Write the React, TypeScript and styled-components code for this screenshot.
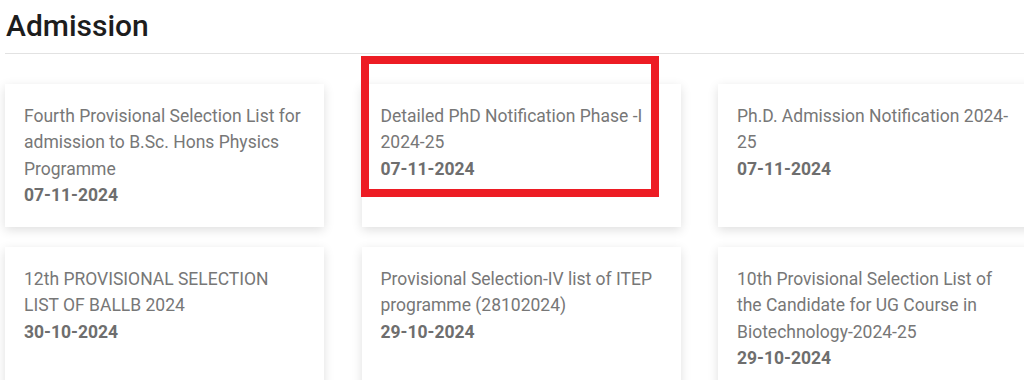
import React from "react";
import styled, { createGlobalStyle } from "styled-components";

const Global = createGlobalStyle`
  html, body { margin: 0; padding: 0; background: #fff; overflow: hidden; }
  body { font-family: Roboto, "Liberation Sans", Arial, sans-serif; }
`;

const Page = styled.div`
  width: 1100px;
  padding: 0 0 0 5px;
  position: relative;
`;

const Title = styled.h2`
  margin: 0;
  padding: 10px 0 0 1px;
  font-size: 30px;
  font-weight: 500;
  line-height: 32px;
  color: #1d1d1d;
  height: 43px;
  border-bottom: 1px solid #e2e2e2;
`;

const Grid = styled.div`
  display: grid;
  grid-template-columns: repeat(3, 319px);
  column-gap: 37.5px;
  row-gap: 20px;
  padding-top: 30px;
`;

const Card = styled.a`
  display: block;
  background: #fff;
  box-shadow: 0 3px 10px rgba(0, 0, 0, 0.13);
  padding: 19px 19px 19px 19px;
  text-decoration: none;
  min-height: 105px;
`;

const Name = styled.div`
  font-size: 17.5px;
  line-height: 26.3px;
  color: #777777;
`;

const DateText = styled.div`
  font-size: 17.5px;
  line-height: 26.3px;
  font-weight: 700;
  color: #6e6e6e;
`;

const Highlight = styled.div`
  position: absolute;
  left: 361px;
  top: 56px;
  width: 282px;
  height: 125px;
  border: 8px solid #ed1c24;
  pointer-events: none;
`;

const items = [
  { t: "Fourth Provisional Selection List for admission to B.Sc. Hons Physics Programme", d: "07-11-2024" },
  { t: "Detailed PhD Notification Phase -I 2024-25", d: "07-11-2024" },
  { t: "Ph.D. Admission Notification 2024-25", d: "07-11-2024" },
  { t: "12th PROVISIONAL SELECTION LIST OF BALLB 2024", d: "30-10-2024" },
  { t: "Provisional Selection-IV list of ITEP programme (28102024)", d: "29-10-2024" },
  { t: "10th Provisional Selection List of the Candidate for UG Course in Biotechnology-2024-25", d: "29-10-2024" },
];

export default function App() {
  return (
    <>
      <Global />
      <Page>
        <Title>Admission</Title>
        <Grid>
          {items.map((it, i) => (
            <Card key={i} href="#">
              <Name>{it.t}</Name>
              <DateText>{it.d}</DateText>
            </Card>
          ))}
        </Grid>
        <Highlight />
      </Page>
    </>
  );
}
